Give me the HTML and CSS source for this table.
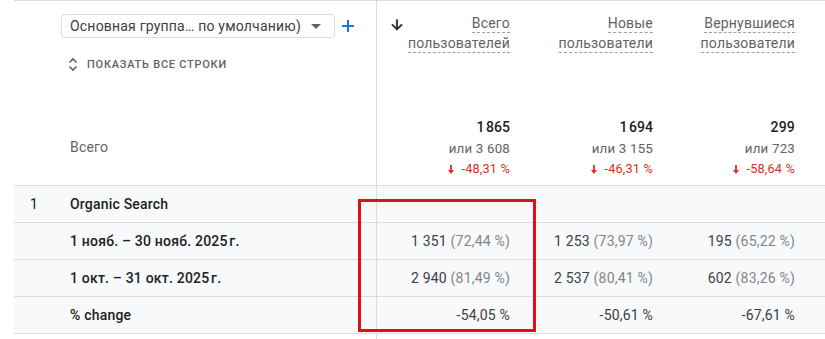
FILE: index.html
```html
<!DOCTYPE html>
<html lang="ru">
<head>
<meta charset="utf-8">
<link rel="stylesheet" href="styles.css">
</head>
<body>
<div class="table">
  <div class="head">
    <div class="label-col head-label">
      <div class="dim-row">
        <div class="select">
          <span class="select-text">Основная группа… по умолчанию)</span>
          <svg class="caret" width="10" height="5" viewBox="0 0 10 5"><path d="M0 0h10L5 5z" fill="#5f6368"/></svg>
        </div>
        <svg class="plus" width="12" height="12" viewBox="0 0 12 12"><path d="M6 0v12M0 6h12" stroke="#1a73e8" stroke-width="2"/></svg>
      </div>
      <div class="show-rows">
        <svg width="10" height="15" viewBox="0 0 10 15"><path d="M1.5 5.5L5 2l3.5 3.5M1.5 9.5L5 13l3.5-3.5" fill="none" stroke="#5f6368" stroke-width="1.6"/></svg>
        <span>Показать все строки</span>
      </div>
      <div class="total-label">Всего</div>
    </div>
    <div class="metric-head first">
      <div class="title-row">
        <svg class="sort" width="16" height="16" viewBox="0 0 24 24"><path d="M20 12l-1.41-1.41L13 16.17V4h-2v12.17l-5.58-5.59L4 12l8 8 8-8z" fill="#202124" stroke="#202124" stroke-width="0.9" stroke-linejoin="round"/></svg>
        <div class="title"><span class="dash">Всего</span><br><span class="dash">пользователей</span></div>
      </div>
      <div class="totals">
        <div class="t-main">1&#8239;865</div>
        <div class="t-sub">или 3&nbsp;608</div>
        <div class="t-delta"><svg width="6" height="9" viewBox="0 0 6 9"><path d="M2.1 0h1.8v5H6L3 9 0 5h2.1z" fill="#d93025"/></svg>-48,31&nbsp;%</div>
      </div>
    </div>
    <div class="metric-head w2">
      <div class="title-row">
        <div class="title"><span class="dash">Новые</span><br><span class="dash">пользователи</span></div>
      </div>
      <div class="totals">
        <div class="t-main">1&#8239;694</div>
        <div class="t-sub">или 3&nbsp;155</div>
        <div class="t-delta"><svg width="6" height="9" viewBox="0 0 6 9"><path d="M2.1 0h1.8v5H6L3 9 0 5h2.1z" fill="#d93025"/></svg>-46,31&nbsp;%</div>
      </div>
    </div>
    <div class="metric-head w3">
      <div class="title-row">
        <div class="title"><span class="dash">Вернувшиеся</span><br><span class="dash">пользователи</span></div>
      </div>
      <div class="totals">
        <div class="t-main">299</div>
        <div class="t-sub">или 723</div>
        <div class="t-delta"><svg width="6" height="9" viewBox="0 0 6 9"><path d="M2.1 0h1.8v5H6L3 9 0 5h2.1z" fill="#d93025"/></svg>-58,64&nbsp;%</div>
      </div>
    </div>
  </div>

  <div class="row">
    <div class="label-col cell-label"><span class="idx">1</span><span class="name">Organic Search</span></div>
    <div class="val first"></div>
    <div class="val w2"></div>
    <div class="val w3"></div>
  </div>
  <div class="row">
    <div class="label-col cell-label"><span class="idx"></span><span class="name">1 нояб. – 30 нояб. 2025&#8239;г.</span></div>
    <div class="val first">1&nbsp;351 <span class="pct">(72,44&nbsp;%)</span></div>
    <div class="val w2">1&nbsp;253 <span class="pct">(73,97&nbsp;%)</span></div>
    <div class="val w3">195 <span class="pct">(65,22&nbsp;%)</span></div>
  </div>
  <div class="row">
    <div class="label-col cell-label"><span class="idx"></span><span class="name">1 окт. – 31 окт. 2025&#8239;г.</span></div>
    <div class="val first">2&nbsp;940 <span class="pct">(81,49&nbsp;%)</span></div>
    <div class="val w2">2&nbsp;537 <span class="pct">(80,41&nbsp;%)</span></div>
    <div class="val w3">602 <span class="pct">(83,26&nbsp;%)</span></div>
  </div>
  <div class="row">
    <div class="label-col cell-label"><span class="idx"></span><span class="name">% change</span></div>
    <div class="val first">-54,05&nbsp;%</div>
    <div class="val w2">-50,61&nbsp;%</div>
    <div class="val w3">-67,61&nbsp;%</div>
  </div>
  <div class="tail"><div class="label-col tail-label"></div></div>
</div>
<div class="highlight"></div>
</body>
</html>
```

FILE: styles.css
```css
* { box-sizing: border-box; }
html, body { margin: 0; padding: 0; background: #fff; }
body {
  font-family: Roboto, "Noto Sans", Arial, sans-serif;
  font-size: 14px;
  letter-spacing: 0.2px;
  color: #202124;
  width: 825px;
  height: 339px;
  overflow: hidden;
  position: relative;
}
.table {
  margin-left: 14px;
  border-top: 1px solid #dadce0;
}
.head {
  display: flex;
  height: 185px;
  border-bottom: 1px solid #dadce0;
}
.label-col {
  width: 363px;
  flex: none;
  border-right: 1px solid #dadce0;
}
.head-label {
  display: flex;
  flex-direction: column;
  padding-top: 13px;
}
.dim-row {
  display: flex;
  align-items: center;
  margin-left: 47px;
}
.select {
  width: 274px;
  height: 24px;
  border: 1px solid #dadce0;
  border-radius: 4px;
  display: flex;
  align-items: center;
  padding: 0 13px 0 8px;
  color: #3c4043;
  font-size: 14px;
}
.select-text { flex: 1; white-space: nowrap; overflow: hidden; }
.caret { flex: none; }
.plus { margin-left: 7px; }
.show-rows {
  display: flex;
  align-items: center;
  margin-left: 54px;
  margin-top: 19px;
  color: #5f6368;
  font-size: 11px;
  font-weight: 500;
  letter-spacing: 0.75px;
  text-transform: uppercase;
}
.show-rows svg { margin-right: 9px; }
.total-label {
  margin-top: auto;
  margin-bottom: 28px;
  margin-left: 56px;
  line-height: 20px;
  color: #5f6368;
}
.metric-head {
  display: flex;
  flex-direction: column;
  justify-content: space-between;
  padding: 12px 16px 6px 0;
  text-align: right;
}
.first { width: 149px; flex: none; }
.w2 { width: 143px; flex: none; }
.w3 { width: 142px; flex: none; }
.title-row {
  display: flex;
  align-items: flex-start;
}
.sort { margin-left: 12px; margin-top: 4px; flex: none; }
.title {
  margin-left: auto;
  line-height: 20px;
  color: #5f6368;
}
.dash {
  border-bottom: 1px dashed #9aa0a6;
  padding-bottom: 1px;
}
.t-main { font-weight: 500; line-height: 20px; color: #202124; }
.t-sub { margin-top: 2px; line-height: 20px; color: #5f6368; font-size: 13.3px; }
.t-delta {
  line-height: 20px;
  color: #d93025;
  font-size: 12.7px;
  display: flex;
  justify-content: flex-end;
  align-items: center;
}
.t-delta svg { margin-right: 7px; }
.row {
  display: flex;
  height: 37px;
  border-bottom: 1px solid #dadce0;
  background: #f8f9fa;
}
.cell-label {
  display: flex;
  align-items: center;
  padding-left: 16px;
  font-weight: 500;
  color: #202124;
}
.idx { width: 40px; flex: none; font-weight: 400; }
.val {
  display: flex;
  align-items: center;
  justify-content: flex-end;
  padding-right: 16px;
  color: #3c4043;
  white-space: pre;
}
.pct { color: #80868b; }
.tail { height: 20px; display: flex; }
.tail-label { height: 100%; }
.highlight {
  position: absolute;
  left: 358px;
  top: 199px;
  width: 178px;
  height: 133px;
  border: 3px solid #df1016;
}
```
